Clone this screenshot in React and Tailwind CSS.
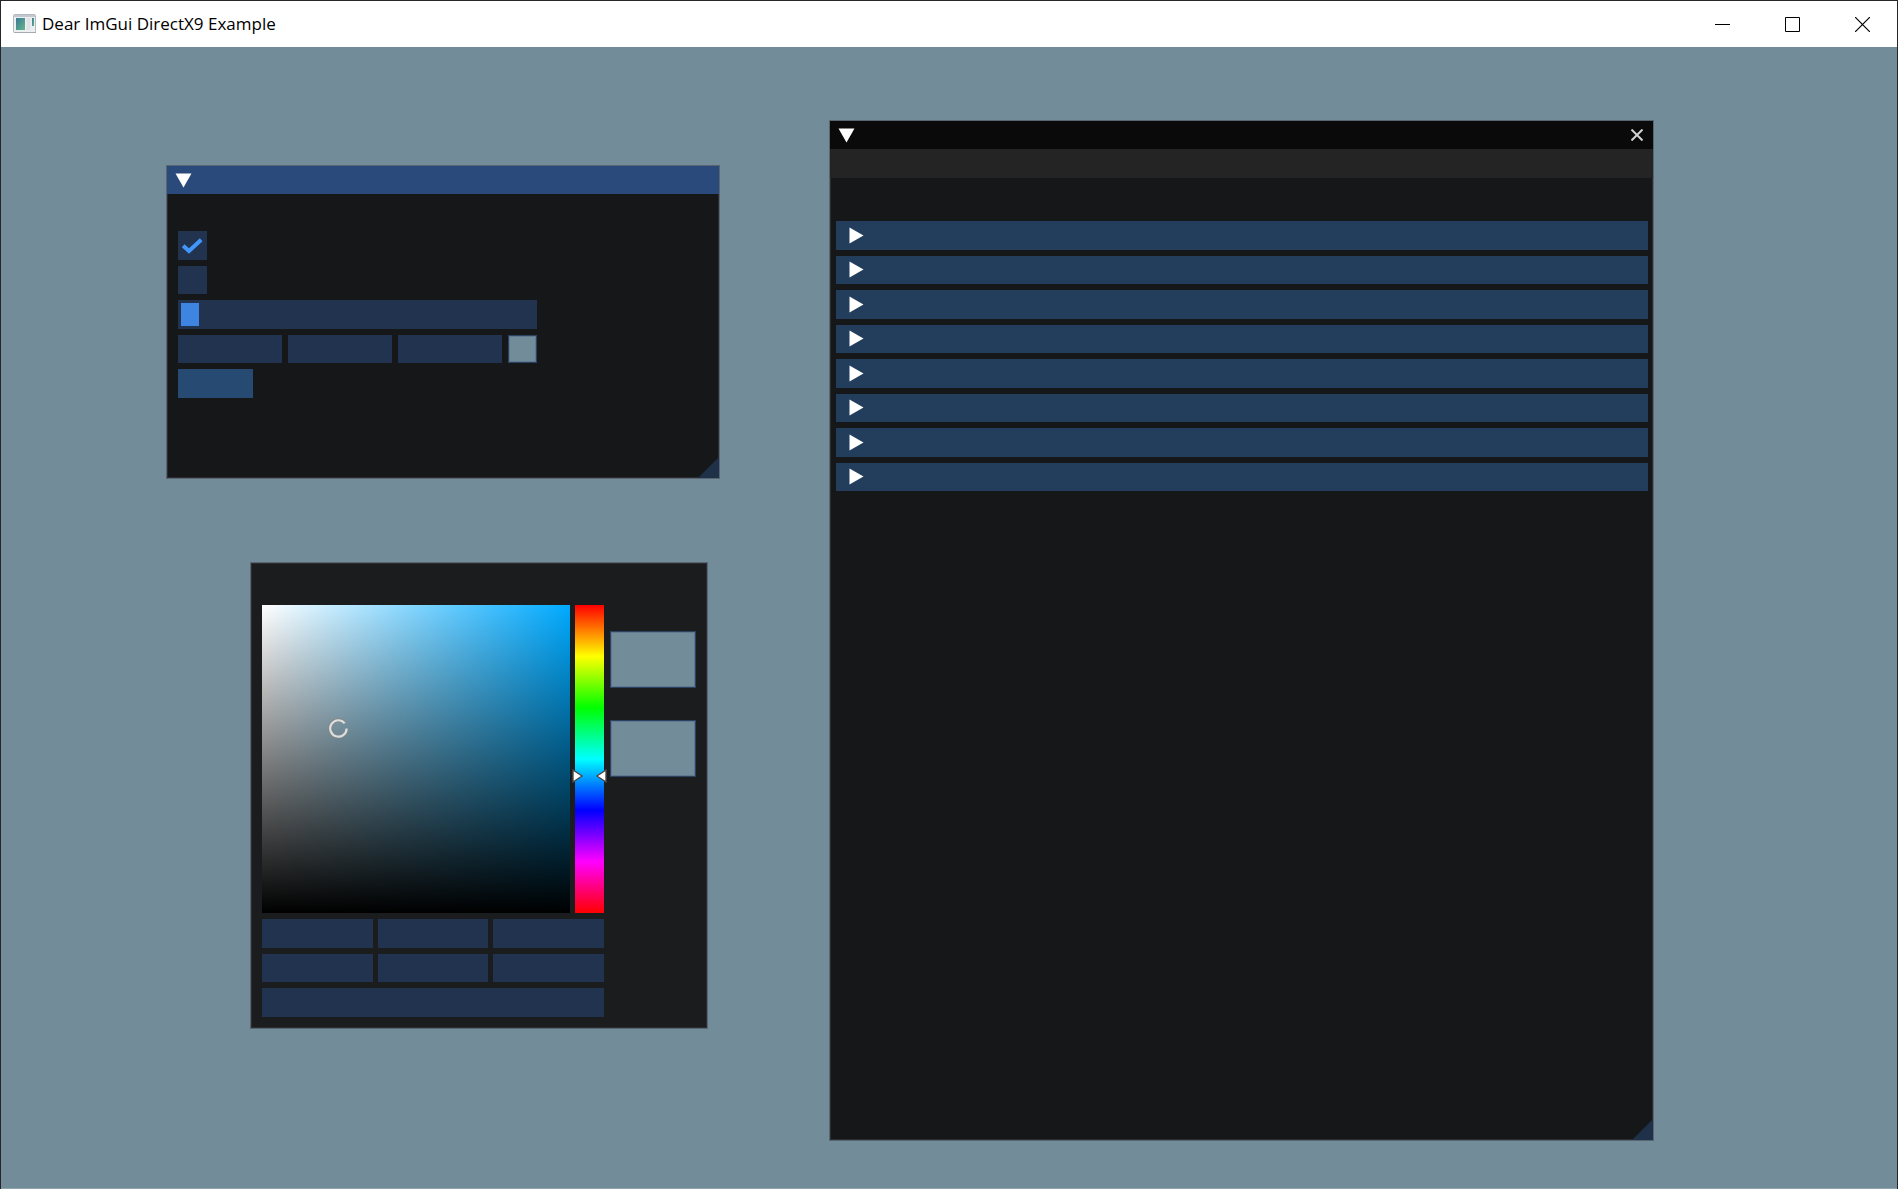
import React, { useState } from "react";

const FRAME = "block w-full min-w-0 h-full bg-[#21334e] text-white px-1 outline-none";

const HEADERS = [
  "Help",
  "Configuration",
  "Window options",
  "Widgets",
  "Layout & Scrolling",
  "Popups & Modal windows",
  "Tables & Columns",
  "Inputs & Focus",
];

const AppIcon = () => (
  <svg width="24" height="20" viewBox="0 0 24 20" aria-hidden="true">
    <defs>
      <linearGradient id="pane" x1="0" y1="0" x2="1" y2="1">
        <stop offset="0" stopColor="#3a7896" />
        <stop offset="1" stopColor="#62b58a" />
      </linearGradient>
    </defs>
    <rect x="0.5" y="0.5" width="22" height="18" rx="1" fill="#eceef0" stroke="#b4b9c2" />
    <path d="M1 2h21" stroke="#c3c8d0" strokeWidth="2" />
    <rect x="3" y="4" width="9" height="12" fill="url(#pane)" />
    <rect x="13.5" y="4" width="4" height="12" fill="#dfe2e6" />
    <rect x="19" y="4" width="2" height="8" fill="url(#pane)" />
    <path d="M1 18.5h22" stroke="#a4a9b2" strokeWidth="1" />
  </svg>
);

const ArrowDown = () => (
  <svg width="17" height="15" viewBox="0 0 17 15" aria-hidden="true">
    <path d="M0.5 0.5h16l-8 14z" fill="#fff" />
  </svg>
);

const ArrowRight = () => (
  <svg width="15" height="17" viewBox="0 0 15 17" aria-hidden="true">
    <path d="M0.5 0.5v16l14-8z" fill="#fff" />
  </svg>
);

const ResizeGrip = () => (
  <svg className="absolute right-0 bottom-0" width="21" height="21" viewBox="0 0 21 21" aria-hidden="true">
    <path d="M21 0v21H0z" fill="#1e3148" />
  </svg>
);

function TitleBar() {
  return (
    <header className="flex h-[46px] shrink-0 items-center bg-white pl-3">
      <AppIcon />
      <h1 className="ml-[5px] flex-1 font-['Open_Sans','Noto_Sans',sans-serif] text-[17px] leading-6 text-black">
        Dear ImGui DirectX9 Example
      </h1>
      <button type="button" aria-label="Minimize" className="flex h-full w-[70px] items-center justify-center">
        <svg width="15" height="15" viewBox="0 0 15 15">
          <path d="M0 7.5h15" stroke="#000" />
        </svg>
      </button>
      <button type="button" aria-label="Maximize" className="flex h-full w-[70px] items-center justify-center">
        <svg width="15" height="15" viewBox="0 0 15 15">
          <path d="M0.5 0.5h14v14h-14z" fill="none" stroke="#000" />
        </svg>
      </button>
      <button type="button" aria-label="Close" className="flex h-full w-[70px] items-center justify-center">
        <svg width="15" height="15" viewBox="0 0 15 15">
          <path d="M0 0l15 15M15 0L0 15" stroke="#000" strokeWidth="1.2" />
        </svg>
      </button>
    </header>
  );
}

function Checkbox({ label, defaultChecked }) {
  const [checked, setChecked] = useState(defaultChecked);

  return (
    <div className="relative w-[29px]">
      <input
        type="checkbox"
        aria-label={label}
        checked={checked}
        onChange={(e) => setChecked(e.target.checked)}
        className="block h-full w-full appearance-none bg-[#21334e]"
      />
      {checked && (
        <svg className="pointer-events-none absolute inset-0" width="29" height="29" viewBox="0 0 29 29" aria-hidden="true">
          <path d="M5.2 14.7l5.8 5.3 12.2-11.3" fill="none" stroke="#4296fa" strokeWidth="4" />
        </svg>
      )}
    </div>
  );
}

function HelloWindow() {
  return (
    <section className="absolute top-[118px] left-[165px] h-[314px] w-[554px] border border-[#5a6572] bg-[#151718] shadow-[inset_0_0_0_1px_#2c2d33]">
      <div className="flex h-7 items-center bg-[#294a7a] pl-2">
        <button type="button" aria-label="Collapse">
          <ArrowDown />
        </button>
      </div>
      <div className="mt-[37px] ml-[11px] grid h-[167px] w-[359px] grid-rows-5 gap-[6px]">
        <Checkbox label="Demo Window" defaultChecked={true} />
        <Checkbox label="Another Window" defaultChecked={false} />
        <input
          type="range"
          aria-label="float"
          min="0"
          max="1"
          step="0.01"
          defaultValue="0"
          className="block h-full w-full appearance-none bg-[#21334e] px-[3px] [&::-webkit-slider-thumb]:h-[23px] [&::-webkit-slider-thumb]:w-[18px] [&::-webkit-slider-thumb]:appearance-none [&::-webkit-slider-thumb]:bg-[#3d85e0]"
        />
        <div className="flex gap-[6px]">
          <input type="text" aria-label="Red" className={FRAME} />
          <input type="text" aria-label="Green" className={FRAME} />
          <input type="text" aria-label="Blue" className={FRAME} />
          <button
            type="button"
            aria-label="clear color"
            className="w-[29px] shrink-0 border border-[#2b4361] bg-[#738c99] shadow-[inset_0_0_0_1px_#5d7a90]"
          />
        </div>
        <button type="button" aria-label="Button" className="w-[75px] bg-[#274a72]" />
      </div>
      <ResizeGrip />
    </section>
  );
}

function DemoWindow() {
  return (
    <section className="absolute top-[73px] left-[828px] h-[1021px] w-[825px] border border-[#5a6572] bg-[#151718] shadow-[inset_0_0_0_1px_#2c2d33]">
      <div className="flex h-7 items-center justify-between bg-[#0a0a0a] pr-[10px] pl-2">
        <button type="button" aria-label="Collapse">
          <ArrowDown />
        </button>
        <button type="button" aria-label="Close window">
          <svg width="12" height="12" viewBox="0 0 12 12">
            <path d="M0.5 0.5l11 11M11.5 0.5l-11 11" stroke="#d2d2d2" strokeWidth="2" />
          </svg>
        </button>
      </div>
      <nav className="h-[29px] bg-[#242424]" />
      <div className="mt-[43px] mr-[5px] ml-[6px] grid h-[270px] grid-rows-8 gap-[6px]">
        {HEADERS.map((name) => (
          <button key={name} type="button" aria-label={name} className="flex items-center bg-[#233e5d] pl-[13px]">
            <ArrowRight />
          </button>
        ))}
      </div>
      <ResizeGrip />
    </section>
  );
}

function ColorPicker() {
  return (
    <section className="absolute top-[515px] left-[249px] flex gap-[6px] border border-[#5a6572] bg-[#1a1c1d] pt-[42px] pr-[11px] pb-[11px] pl-[11px] shadow-[inset_0_0_0_1px_#2c2d33]">
      <div className="w-[342px]">
        <div className="flex justify-between">
          {/* saturation / value square */}
          <div className="relative h-[308px] w-[308px] bg-[linear-gradient(to_bottom,transparent,#000),linear-gradient(to_right,#fff,#00aaff)]">
            <svg className="absolute top-[113px] left-[66px]" width="20" height="20" viewBox="0 0 20 20" aria-hidden="true">
              <path d="M19 10.3A8.5 8.5 0 1 1 17 5" fill="none" stroke="#85857f" strokeWidth="3.4" />
              <path d="M18.6 10.5A8.2 8.2 0 1 1 16.7 5.2" fill="none" stroke="#dcdfdf" strokeWidth="2.2" />
            </svg>
          </div>
          {/* hue bar */}
          <div className="relative w-[29px] bg-[linear-gradient(to_bottom,#f00,#ff0,#0f0,#0ff,#00f,#f0f,#f00)]">
            <svg className="absolute top-[164px] -left-[3px]" width="35" height="14" viewBox="0 0 35 14" aria-hidden="true">
              <path d="M1 1v12l9-6zM34 1v12l-9-6z" fill="#fff" stroke="#4a4a4a" strokeWidth="1.4" />
            </svg>
          </div>
        </div>
        <div className="mt-[6px] grid h-[98px] grid-cols-3 grid-rows-3 gap-x-[5px] gap-y-[6px]">
          {["R", "G", "B", "H", "S", "V"].map((channel) => (
            <input key={channel} type="text" aria-label={channel} className={FRAME} />
          ))}
          <div className="col-span-3">
            <input type="text" aria-label="Hex" className={FRAME} />
          </div>
        </div>
      </div>
      <div className="flex w-[86px] flex-col gap-8 pt-[26px]">
        <button
          type="button"
          aria-label="Current"
          className="h-[57px] border border-[#2b4361] bg-[#738c99] shadow-[inset_0_0_0_1px_#5d7a90]"
        />
        <button
          type="button"
          aria-label="Original"
          className="h-[57px] border border-[#2b4361] bg-[#738c99] shadow-[inset_0_0_0_1px_#5d7a90]"
        />
      </div>
    </section>
  );
}

export default function App() {
  return (
    <div className="flex min-h-screen flex-col border-x border-t border-[#26262a] bg-[#738c99]">
      <TitleBar />
      <main className="relative min-h-[1142px] flex-1 border-b border-[#8ea3ad]">
        <HelloWindow />
        <DemoWindow />
        <ColorPicker />
      </main>
    </div>
  );
}
